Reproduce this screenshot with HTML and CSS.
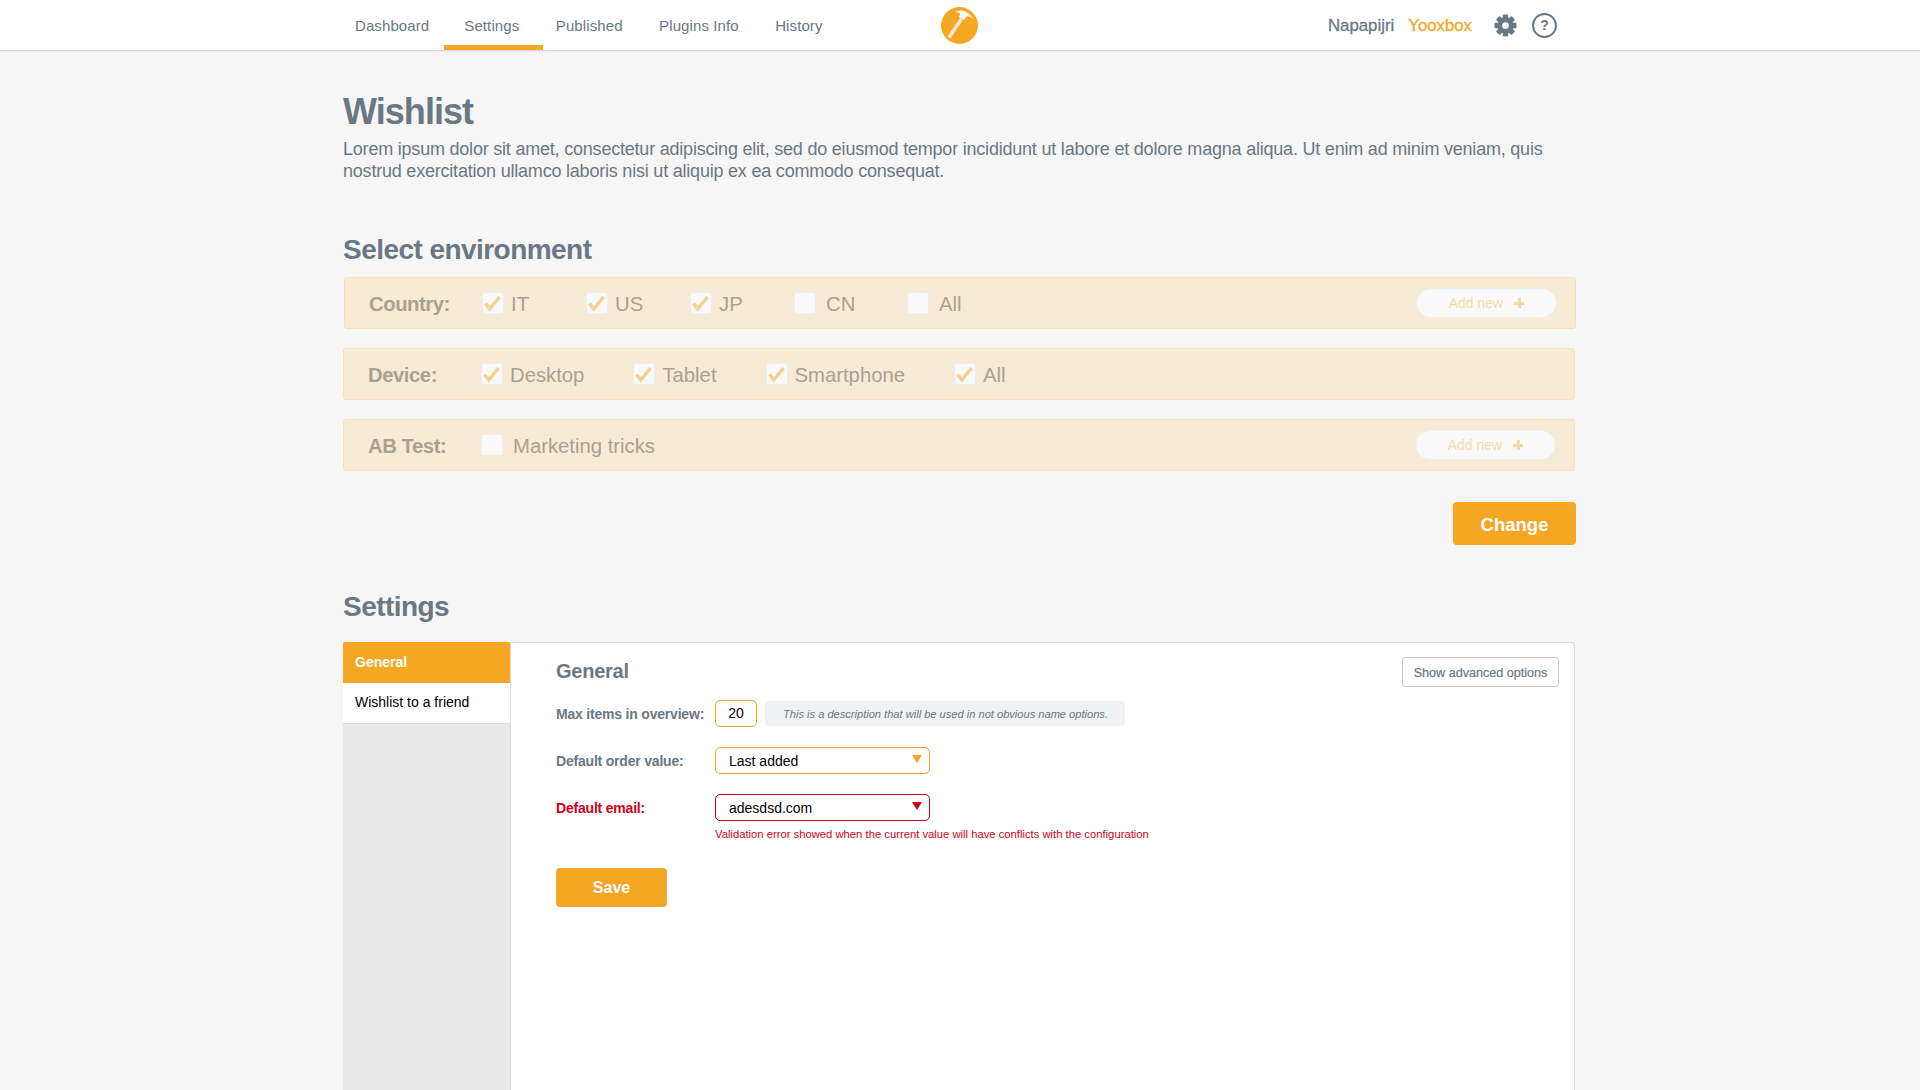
FILE: index.html
```html
<!DOCTYPE html>
<html lang="en">
<head>
<meta charset="utf-8">
<title>Wishlist</title>
<link rel="stylesheet" href="styles.css">
</head>
<body>
<header class="topbar">
  <div class="topbar-inner">
    <nav class="tabs">
      <a class="tab tab-first">Dashboard</a>
      <a class="tab tab-active">Settings</a>
      <a class="tab">Published</a>
      <a class="tab">Plugins Info</a>
      <a class="tab">History</a>
    </nav>
    <svg class="logo" viewBox="0 0 36 36" aria-label="logo">
      <circle cx="18" cy="18" r="18" fill="#f5a623"/>
      <path d="M6.5 28.5 L18.6 10.4 L21.6 12.2 L9.4 30.4 Q7.6 30.8 6.5 28.5Z" fill="#f3e7d3"/>
      <path d="M14 4.5 Q20 2 25 5 Q29 7.5 31.5 11.5 L28.5 9.8 Q26 8.5 24.4 9.6 L22.6 12.6 L17.4 9.4 L18.8 6.6 Q16.5 5 14 4.5Z" fill="#fff"/>
    </svg>
    <div class="user">
      <span class="user-name">Napapijri</span>
      <span class="user-shop">Yooxbox</span>
      <svg class="gear" viewBox="0 0 24 24" aria-label="settings">
        <g fill="#6a7885">
          <rect x="9.2" y="0.5" width="5.6" height="23" rx="1"/>
          <rect x="9.2" y="0.5" width="5.6" height="23" rx="1" transform="rotate(45 12 12)"/>
          <rect x="9.2" y="0.5" width="5.6" height="23" rx="1" transform="rotate(90 12 12)"/>
          <rect x="9.2" y="0.5" width="5.6" height="23" rx="1" transform="rotate(135 12 12)"/>
        </g>
        <circle cx="12" cy="12" r="6" fill="none" stroke="#6a7885" stroke-width="5"/>
        <circle cx="12" cy="12" r="3.5" fill="#fff"/>
      </svg>
      <span class="help">?</span>
    </div>
  </div>
</header>

<main class="page">
  <h1 class="title">Wishlist</h1>
  <p class="intro">Lorem ipsum dolor sit amet, consectetur adipiscing elit, sed do eiusmod tempor incididunt ut labore et dolore magna aliqua. Ut enim ad minim veniam, quis nostrud exercitation ullamco laboris nisi ut aliquip ex ea commodo consequat.</p>

  <h2 class="section">Select environment</h2>

  <section class="env env-first">
    <span class="env-label">Country:</span>
    <label class="opt opt-fixed"><span class="box"><svg viewBox="0 0 20 20"><path d="M2.5 10.5 L6.8 16 L16.5 4"/></svg></span>IT</label>
    <label class="opt opt-fixed"><span class="box"><svg viewBox="0 0 20 20"><path d="M2.5 10.5 L6.8 16 L16.5 4"/></svg></span>US</label>
    <label class="opt opt-fixed"><span class="box"><svg viewBox="0 0 20 20"><path d="M2.5 10.5 L6.8 16 L16.5 4"/></svg></span>JP</label>
    <label class="opt opt-off opt-fixed-wide"><span class="box"></span>CN</label>
    <label class="opt opt-off"><span class="box"></span>All</label>
    <a class="add">Add new<span class="plus"></span></a>
  </section>

  <section class="env">
    <span class="env-label">Device:</span>
    <label class="opt"><span class="box"><svg viewBox="0 0 20 20"><path d="M2.5 10.5 L6.8 16 L16.5 4"/></svg></span>Desktop</label>
    <label class="opt"><span class="box"><svg viewBox="0 0 20 20"><path d="M2.5 10.5 L6.8 16 L16.5 4"/></svg></span>Tablet</label>
    <label class="opt"><span class="box"><svg viewBox="0 0 20 20"><path d="M2.5 10.5 L6.8 16 L16.5 4"/></svg></span>Smartphone</label>
    <label class="opt"><span class="box"><svg viewBox="0 0 20 20"><path d="M2.5 10.5 L6.8 16 L16.5 4"/></svg></span>All</label>
  </section>

  <section class="env">
    <span class="env-label">AB Test:</span>
    <label class="opt opt-off"><span class="box"></span>Marketing tricks</label>
    <a class="add">Add new<span class="plus"></span></a>
  </section>

  <div class="actions"><button class="btn btn-change">Change</button></div>

  <h2 class="section section-settings">Settings</h2>

  <div class="panel">
    <aside class="side">
      <a class="side-item side-active">General</a>
      <a class="side-item">Wishlist to a friend</a>
    </aside>
    <section class="content">
      <div class="content-head">
        <h3 class="content-title">General</h3>
        <button class="ghost">Show advanced options</button>
      </div>
      <div class="field">
        <span class="field-label">Max items in overview:</span>
        <span class="num">20</span>
        <span class="note">This is a description that will be used in not obvious name options.</span>
      </div>
      <div class="field">
        <span class="field-label">Default order value:</span>
        <span class="select">Last added<span class="caret"></span></span>
      </div>
      <div class="field field-error">
        <span class="field-label">Default email:</span>
        <span class="select">adesdsd.com<span class="caret"></span></span>
      </div>
      <p class="error">Validation error showed when the current value will have conflicts with the configuration</p>
      <button class="btn btn-save">Save</button>
    </section>
  </div>
</main>
</body>
</html>
```

FILE: styles.css
```css
* { box-sizing: border-box; }
html, body { height: 100%; }
body {
  margin: 0;
  overflow: hidden;
  background: #f6f6f6;
  color: #6a7885;
  font-family: "Liberation Sans", Arial, sans-serif;
}
a { display: block; }

.topbar {
  height: 51px;
  background: #fff;
  border-bottom: 1px solid #d8d8d8;
  box-shadow: 0 1px 1px rgba(0,0,0,.04);
}
.topbar-inner {
  position: relative;
  width: 1233px;
  height: 50px;
  margin-left: 343px;
  display: flex;
  justify-content: space-between;
}
.tabs { display: flex; padding-left: 12px; }
.tab {
  position: relative;
  font-size: 15px;
  line-height: 51px;
  margin-right: 36.5px;
  letter-spacing: .1px;
}
.tab-first { margin-right: 35px; }
.tab-active::after {
  content: "";
  position: absolute;
  left: -20px;
  right: -24px;
  bottom: 0;
  height: 5px;
  background: #f5a623;
}
.logo {
  position: absolute;
  left: 598px;
  top: 7px;
  width: 37px;
  height: 37px;
}
.user { display: flex; align-items: center; padding-right: 19px; font-size: 16.8px; padding-top: 1px; }
.user-name { -webkit-text-stroke: .3px #6a7885; margin-right: 14px; }
.user-shop { color: #f5a623; -webkit-text-stroke: .3px #f5a623; margin-right: 22px; }
.gear { width: 23px; height: 23px; margin: -1px 15px 0 0; }
.help {
  width: 25px;
  height: 25px;
  margin-top: -1px;
  border: 2px solid #6a7885;
  border-radius: 50%;
  font-size: 14px;
  font-weight: 700;
  line-height: 20px;
  text-align: center;
}

.page { width: 1233px; margin-left: 343px; }
.title {
  margin: 39px 0 0;
  font-size: 36px;
  line-height: 44px;
  font-weight: 700;
  letter-spacing: -.95px;
}
.intro {
  margin: 4px 0 0;
  font-size: 18px;
  line-height: 22px;
  letter-spacing: -.21px;
  width: 1225px;
}
.section {
  margin: 51px 0 10px;
  font-size: 28px;
  line-height: 34px;
  font-weight: 700;
  letter-spacing: -.55px;
}
.section-settings { margin: 45px 0 18px; }

.env {
  display: flex;
  align-items: center;
  height: 52px;
  width: 1232px;
  margin-bottom: 19px;
  padding: 2px 18px 0 24px;
  background: #f8ebd5;
  border: 1px solid #f9e0b8;
  border-radius: 3px;
  color: #a9a18f;
  font-size: 20.3px;
}
.env-first { margin-left: 1px; }
.env-label { width: 113px; font-weight: 700; letter-spacing: -.45px; }
.opt {
  display: flex;
  align-items: center;
  gap: 7px;
  margin-right: 49px;
}
.opt-off { gap: 10px; }
.opt-fixed { width: 104px; margin-right: 0; }
.opt-fixed-wide { width: 113px; margin-right: 0; }
.box {
  flex: none;
  width: 22px;
  height: 22px;
  margin-top: -2px;
  background: #f9f9fa;
  border: 1px solid #eeeef0;
  border-radius: 3px;
}
.box svg { display: block; width: 20px; height: 20px; }
.box path { fill: none; stroke: #f8d08e; stroke-width: 3.4; }
.add {
  display: flex;
  align-items: center;
  justify-content: center;
  margin: -2px 0 0 auto;
  width: 141px;
  height: 30px;
  background: #f9f9f9;
  border: 1px solid #f0eee9;
  border-radius: 15px;
  color: #f8d9a5;
  font-size: 14px;
}
.plus {
  width: 10px;
  height: 10px;
  margin-left: 11px;
  background:
    linear-gradient(#f8d9a5, #f8d9a5) center / 100% 3px no-repeat,
    linear-gradient(#f8d9a5, #f8d9a5) center / 3px 100% no-repeat;
}

.actions { display: flex; justify-content: flex-end; margin-top: 31px; }
.btn {
  display: block;
  padding: 0;
  border: 0;
  border-radius: 4px;
  background: #f5a623;
  color: #fff;
  font-family: inherit;
  font-weight: 700;
}
.btn-change { width: 123px; height: 43px; padding-top: 2px; font-size: 18.5px; }
.btn-save { width: 111px; height: 39px; font-size: 16px; margin-top: 27px; }

.panel { display: flex; width: 1232px; height: 500px; }
.side {
  flex: none;
  width: 168px;
  background: #e9e9e9;
  border-right: 1px solid #ddd;
}
.side-item {
  height: 41px;
  padding-left: 12px;
  line-height: 38px;
  font-size: 14px;
  color: #000;
  background: #fff;
  border-bottom: 1px solid #ddd;
}
.side-active {
  line-height: 40px;
  background: #f5a623;
  color: #fff;
  font-weight: 700;
  border: 0;
  border-radius: 2px 2px 0 0;
}
.content {
  flex: 1;
  padding: 14px 15px 0 45px;
  background: #fff;
  border: 1px solid #ddd;
  border-left: 0;
  border-radius: 0 4px 0 0;
}
.content-head { display: flex; align-items: center; justify-content: space-between; margin-bottom: 13px; }
.content-title { margin: -2px 0 0; font-size: 20px; line-height: 30px; font-weight: 700; letter-spacing: -.25px; }
.ghost {
  width: 157px;
  height: 30px;
  padding: 2px 0 0;
  background: #fff;
  border: 1px solid #ccc;
  border-radius: 3px;
  color: #6a7885;
  font-family: inherit;
  font-size: 12.6px;
  -webkit-text-stroke: .2px #6a7885;
}
.field { display: flex; align-items: center; height: 27px; margin-bottom: 20px; font-size: 14px; }
.field-label { flex: none; width: 159px; font-weight: 700; letter-spacing: -.2px; }
.num {
  width: 42px;
  height: 27px;
  border: 1px solid #f5a623;
  border-radius: 5px;
  color: #000;
  line-height: 25px;
  text-align: center;
}
.note {
  width: 360px;
  height: 25px;
  margin-left: 8px;
  padding-left: 18px;
  background: #eff1f3;
  border-radius: 4px;
  font-size: 11.1px;
  line-height: 26px;
  font-style: italic;
  white-space: nowrap;
}
.select {
  display: flex;
  align-items: center;
  justify-content: space-between;
  width: 215px;
  height: 27px;
  padding: 0 7px 0 13px;
  border: 1px solid #f5a623;
  border-radius: 5px;
  color: #000;
}
.caret {
  border: solid transparent;
  border-width: 8px 5.5px 0;
  border-top-color: #f5a623;
  margin-bottom: 3px;
}
.field-error { margin-bottom: 0; }
.field-error .field-label { color: #d0021b; }
.field-error .select { border-color: #d0021b; }
.field-error .caret { border-top-color: #d0021b; }
.error {
  margin: 6px 0 0 159px;
  font-size: 11.25px;
  line-height: 14px;
  color: #d0021b;
}
```
